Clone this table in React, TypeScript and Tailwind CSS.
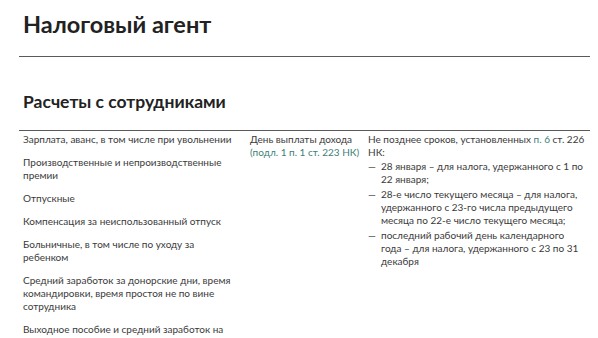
import React from "react";

const font = { fontFamily: "Lato, 'Open Sans', sans-serif" };

export default function App() {
  return (
    <div className="w-[598px] h-[338px] overflow-hidden bg-white text-[#3a3a3a]" style={font}>
      <div className="pl-[19px] pr-[8px]">
        <h1 className="pl-[4px] pt-[9px] text-[23.5px] leading-[30px] font-bold text-[#222]">
          Налоговый агент
        </h1>
        <div className="mt-[17px] border-t border-[#5a5a5a]" />
        <h2 className="pl-[4px] mt-[34px] text-[17.5px] leading-[22px] font-bold text-[#222]">
          Расчеты с сотрудниками
        </h2>
        <div className="mt-[17px] border-t border-[#5a5a5a]" />
        <div className="grid grid-cols-[227px_118px_1fr] text-[10px] leading-[13px] pt-[2px]">
          <div className="pl-[4px] pr-[6px] flex flex-col gap-[10px]">
            <p>Зарплата, аванс, в том числе при увольнении</p>
            <p>Производственные и непроизводственные премии</p>
            <p>Отпускные</p>
            <p>Компенсация за неиспользованный отпуск</p>
            <p>Больничные, в том числе по уходу за ребенком</p>
            <p>Средний заработок за донорские дни, время командировки, время простоя не по вине сотрудника</p>
            <p>Выходное пособие и средний заработок на период трудоустройства</p>
          </div>
          <div className="pl-[4px]">
            <p>День выплаты дохода</p>
            <p className="text-[#3d7f78]">(подл. 1 п. 1 ст. 223 НК)</p>
          </div>
          <div className="pl-[4px] pr-[4px]">
            <p>
              Не позднее сроков, установленных <span className="text-[#3d7f78]">п. 6</span> ст. 226 НК:
            </p>
            <ul className="mt-[1px] flex flex-col gap-[2px]">
              <li className="flex">
                <span className="w-[13px] shrink-0">—</span>
                <span>28 января – для налога, удержанного с 1 по 22 января;</span>
              </li>
              <li className="flex">
                <span className="w-[13px] shrink-0">—</span>
                <span>28-е число текущего месяца – для налога, удержанного с 23-го числа предыдущего месяца по 22-е число текущего месяца;</span>
              </li>
              <li className="flex">
                <span className="w-[13px] shrink-0">—</span>
                <span>последний рабочий день календарного года – для налога, удержанного с 23 по 31 декабря</span>
              </li>
            </ul>
          </div>
        </div>
      </div>
    </div>
  );
}
